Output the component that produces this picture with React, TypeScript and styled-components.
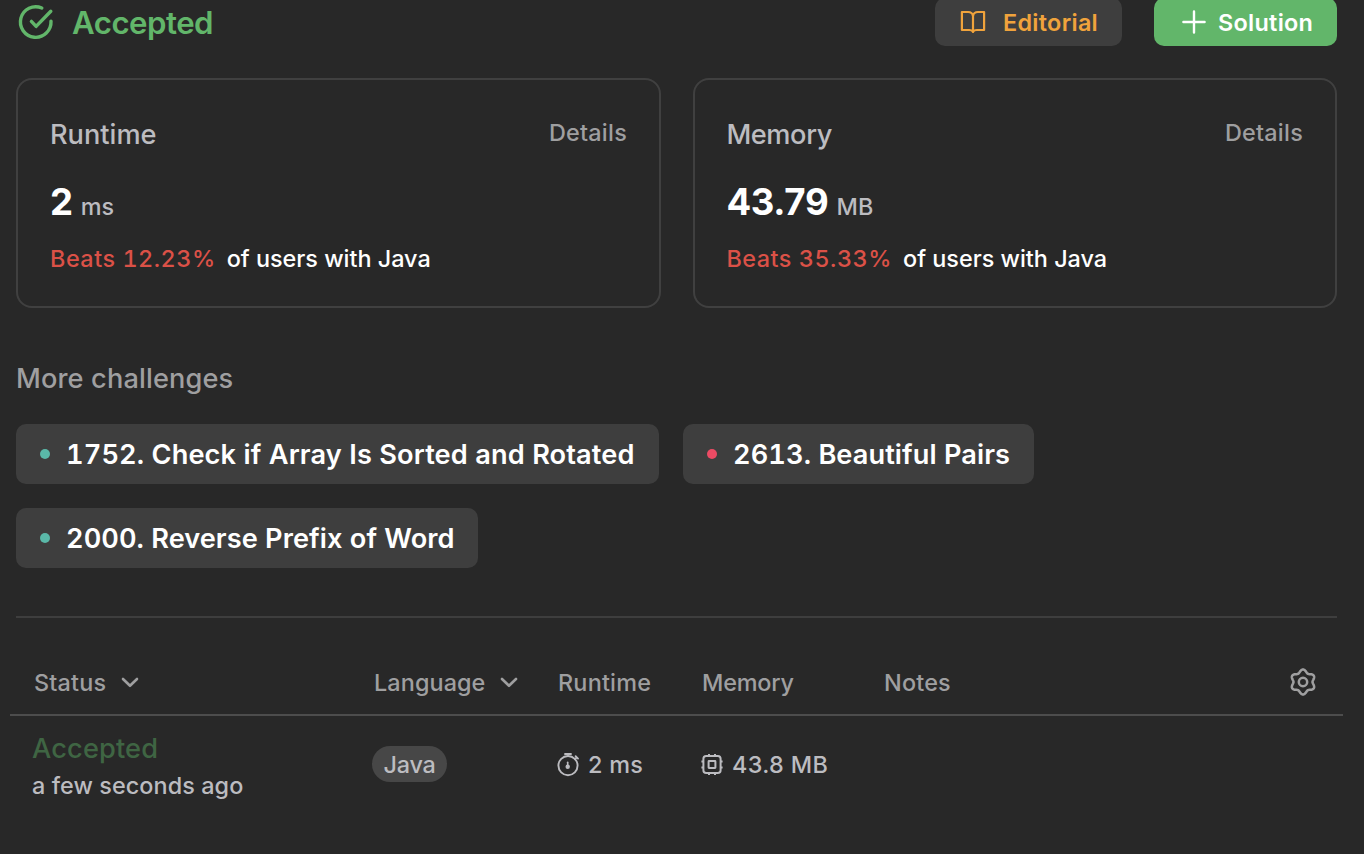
import React from "react";
import styled, { createGlobalStyle, css } from "styled-components";

const GlobalStyle = createGlobalStyle`
  *, *::before, *::after { box-sizing: border-box; }
  html, body { margin: 0; padding: 0; background: #282828; }
  body { overflow: hidden; }
  button { font: inherit; border: 0; padding: 0; background: none; color: inherit; }
`;

const color = {
  page: "#282828",
  chip: "#3e3e3e",
  line: "#3e3e3e",
  headLine: "#4d4d4d",
  green: "#62b66a",
  orange: "#f0a33c",
  red: "#db5147",
  white: "#ffffff",
  label: "#bcbcc0",
  muted: "#9f9fa0",
};

const Page = styled.main`
  width: 1364px;
  height: 854px;
  overflow: hidden;
  background: ${color.page};
  color: ${color.white};
  font-family: Inter, "Liberation Sans", sans-serif;
  font-size: 23.4px;
  font-weight: 500;
  line-height: 28px;
  white-space: nowrap;
`;

const track = css<{ $track?: number }>`
  letter-spacing: ${(p) => p.$track ?? 0}px;
`;

const Content = styled.div`
  display: flex;
  flex-direction: column;
  padding: 0 27px 0 16px;
`;

const Header = styled.header`
  display: flex;
  justify-content: space-between;
  height: 46px;
`;

const Verdict = styled.h1`
  display: flex;
  align-items: center;
  gap: 16px;
  height: 45px;
  margin: 0;
  color: ${color.green};
  font-size: 31.2px;
  font-weight: 600;
  letter-spacing: -0.5px;
`;

const Actions = styled.div`
  display: flex;
  gap: 32px;
`;

const ActionButton = styled.button<{ $bg: string; $fg: string; $width: number; $gap: number; $left: number }>`
  display: flex;
  align-items: center;
  gap: ${(p) => p.$gap}px;
  width: ${(p) => p.$width}px;
  height: 48px;
  margin-top: -2px;
  padding-left: ${(p) => p.$left}px;
  border-radius: 10px;
  background: ${(p) => p.$bg};
  color: ${(p) => p.$fg};
  font-weight: 600;
  line-height: 30px;
  letter-spacing: 0.3px;
`;

const ButtonLabel = styled.span`
  padding-top: 1px;
`;

const Cards = styled.section`
  display: grid;
  grid-template-columns: 645px 644px;
  gap: 32px;
  margin-top: 32px;
`;

const Card = styled.article`
  display: flex;
  flex-direction: column;
  height: 230px;
  padding: 38px 32px 0;
  border: 2px solid #404040;
  border-radius: 16px;

  & + & {
    padding-left: 31.4px;
  }
`;

const CardTop = styled.div`
  display: flex;
  justify-content: space-between;
  height: 32px;
`;

const CardTitle = styled.h2<{ $track?: number }>`
  margin: 0;
  color: ${color.label};
  font-size: 27.2px;
  font-weight: 500;
  line-height: 34px;
  ${track}
`;

const Details = styled.span`
  color: ${color.muted};
  line-height: 29px;
  letter-spacing: 0.25px;
`;

const Value = styled.div`
  display: flex;
  align-items: baseline;
  gap: 8px;
  height: 40px;
  margin-top: 32px;
  line-height: 41px;
`;

const Amount = styled.strong`
  font-size: 36.6px;
  font-weight: 700;
  letter-spacing: -0.3px;
`;

const Unit = styled.span<{ $track?: number }>`
  color: ${color.label};
  ${track}
`;

const Beats = styled.p`
  display: flex;
  gap: 11px;
  margin: 23px 0 0;
`;

const Percent = styled.span`
  color: ${color.red};
  font-variant-numeric: tabular-nums;
  letter-spacing: 0.52px;
`;

const SectionTitle = styled.h3`
  margin: 55px 0 29px;
  color: ${color.muted};
  font-size: 27.2px;
  font-weight: 500;
  line-height: 32px;
  letter-spacing: 0.13px;
`;

const Chips = styled.div`
  display: flex;
  flex-wrap: wrap;
  gap: 24px;
  padding-bottom: 48px;
  border-bottom: 2px solid ${color.line};
`;

const Chip = styled.div<{ $width: number; $track?: number }>`
  display: flex;
  align-items: center;
  gap: 16px;
  width: ${(p) => p.$width}px;
  height: 60px;
  padding-left: 24px;
  border-radius: 10px;
  background: ${color.chip};
  font-size: 27.2px;
  font-weight: 600;
  font-variant-numeric: tabular-nums;
  ${track}
`;

const ChipLabel = styled.span`
  padding-top: 2px;
`;

const Dot = styled.i<{ $color: string }>`
  flex: none;
  width: 10px;
  height: 10px;
  border-radius: 50%;
  background: ${(p) => p.$color};
`;

const Table = styled.section`
  margin: 32px 21px 0 10px;
`;

const columns = css`
  display: grid;
  grid-template-columns: 340px 184px 144px 182px 1fr;
`;

const TableHead = styled.div`
  ${columns}
  align-items: center;
  height: 66px;
  padding: 0 25px 0 24px;
  border-bottom: 2px solid ${color.headLine};
  color: ${color.muted};
`;

const HeadCell = styled.div<{ $track?: number }>`
  display: flex;
  align-items: center;
  gap: 14px;
  ${track}
`;

const HeadLabel = styled.span`
  padding-top: 2px;
`;

const LastCell = styled(HeadCell)`
  justify-content: space-between;
`;

const TableRow = styled.div`
  ${columns}
  align-items: center;
  height: 96px;
  padding-left: 22px;
  color: ${color.label};
`;

const Status = styled.div`
  display: flex;
  flex-direction: column;
  gap: 7px;
  margin-top: 4px;
  letter-spacing: 0.08px;
`;

const StatusName = styled.span`
  color: #3f6543;
  font-size: 27.2px;
  line-height: 32px;
  letter-spacing: 0.15px;
`;

const Tag = styled.span`
  display: flex;
  align-items: center;
  justify-content: center;
  width: 75px;
  height: 36px;
  padding-top: 1px;
  border-radius: 18px;
  background: #474747;
  letter-spacing: -0.25px;
`;

const Metric = styled.div<{ $track?: number }>`
  display: flex;
  align-items: center;
  gap: 8px;
  padding-top: 1px;
  ${track}
`;

const Svg = styled.svg`
  flex: none;
  display: block;
  fill: none;
  stroke: currentColor;
  stroke-linecap: round;
  stroke-linejoin: round;
`;

const CheckIcon = () => (
  <Svg width="40" height="40" viewBox="0 0 40 40" strokeWidth="3.4">
    <path d="M25.8 5A15.3 15.3 0 1 0 35 18.2" />
    <path d="M15.4 18.4l4.7 5L34.8 8.2" />
  </Svg>
);

const BookIcon = () => (
  <Svg width="26" height="26" viewBox="0 0 26 26" strokeWidth="2.2" strokeLinejoin="miter">
    <path d="M13 6.7C12.4 4.2 10.8 3 8.2 3H1.9V21H9.2C11.4 21 12.6 21.6 13 23C13.4 21.6 14.6 21 16.8 21H24.1V3H17.8C15.2 3 13.6 4.2 13 6.7Z" />
    <path d="M13 6.5V22.6" />
  </Svg>
);

const PlusIcon = () => (
  <Svg width="26" height="26" viewBox="0 0 26 26" strokeWidth="2.4">
    <path d="M13 2.4V23.6M2.4 13H23.6" />
  </Svg>
);

const ChevronIcon = () => (
  <Svg width="20" height="20" viewBox="0 0 20 20" strokeWidth="2.6">
    <path d="M3 7L10 13.8L17 7" />
  </Svg>
);

// Six-lobed outline, with one lobe pointing straight up.
const gearOutline = Array.from({ length: 120 }, (_, i) => {
  const angle = (i * Math.PI) / 60;
  const radius = 11 - 1.5 * Math.cos(6 * angle);
  return `${(15 + radius * Math.cos(angle)).toFixed(2)},${(15 + radius * Math.sin(angle)).toFixed(2)}`;
}).join(" ");

const GearIcon = () => (
  <Svg width="30" height="30" viewBox="0 0 30 30" strokeWidth="2.5">
    <circle cx="15" cy="15" r="4.2" />
    <polygon points={gearOutline} />
  </Svg>
);

const StopwatchIcon = () => (
  <Svg width="24" height="24" viewBox="0 0 24 24" strokeWidth="1.9">
    <circle cx="12" cy="12.6" r="9.6" />
    <path d="M9 1H15" />
    <path d="M19.6 3.2L22 5.6M20.8 4.4L19 6.2" />
    <path d="M11.7 9.2V14" strokeWidth="1.6" />
    <circle cx="11.7" cy="13.8" r="2.2" fill="currentColor" stroke="none" />
  </Svg>
);

const ChipIcon = () => (
  <Svg width="24" height="24" viewBox="0 0 24 24" strokeWidth="2">
    <rect x="3.4" y="2.9" width="17.2" height="17.2" rx="2.8" />
    <rect x="8.6" y="8.1" width="6.8" height="6.8" rx="0.4" />
    <path
      strokeLinecap="butt"
      d="M9 2.9V0.9M15 2.9V0.9M9 20.1V22.1M15 20.1V22.1M3.4 8.5H1.4M3.4 14.5H1.4M20.6 8.5H22.6M20.6 14.5H22.6"
    />
  </Svg>
);

type StatProps = { title: string; titleTrack?: number; amount: string; unit: string; unitTrack?: number; percent: string };

const Stat = ({ title, titleTrack, amount, unit, unitTrack, percent }: StatProps) => (
  <Card>
    <CardTop>
      <CardTitle $track={titleTrack}>{title}</CardTitle>
      <Details>Details</Details>
    </CardTop>
    <Value>
      <Amount>{amount}</Amount>
      <Unit $track={unitTrack}>{unit}</Unit>
    </Value>
    <Beats>
      <Percent>Beats {percent}</Percent>
      <span>of users with Java</span>
    </Beats>
  </Card>
);

const challenges = [
  { name: "1752. Check if Array Is Sorted and Rotated", dot: "#5ab8a8", width: 643, track: 0.1 },
  { name: "2613. Beautiful Pairs", dot: "#ec4b64", width: 351, track: 0.07 },
  { name: "2000. Reverse Prefix of Word", dot: "#5ab8a8", width: 462, track: 0.04 },
];

export default function App() {
  return (
    <Page>
      <GlobalStyle />
      <Content>
        <Header>
          <Verdict>
            <CheckIcon />
            Accepted
          </Verdict>
          <Actions>
            <ActionButton $bg={color.chip} $fg={color.orange} $width={187} $gap={17} $left={25}>
              <BookIcon />
              <ButtonLabel>Editorial</ButtonLabel>
            </ActionButton>
            <ActionButton $bg={color.green} $fg={color.white} $width={183} $gap={11} $left={27}>
              <PlusIcon />
              <ButtonLabel>Solution</ButtonLabel>
            </ActionButton>
          </Actions>
        </Header>
        <Cards>
          <Stat title="Runtime" amount="2" unit="ms" percent="12.23%" />
          <Stat title="Memory" titleTrack={-0.4} amount="43.79" unit="MB" unitTrack={0.1} percent="35.33%" />
        </Cards>
        <SectionTitle>More challenges</SectionTitle>
        <Chips>
          {challenges.map((c) => (
            <Chip key={c.name} $width={c.width} $track={c.track}>
              <Dot $color={c.dot} />
              <ChipLabel>{c.name}</ChipLabel>
            </Chip>
          ))}
        </Chips>
      </Content>
      <Table>
        <TableHead>
          <HeadCell $track={0.2}>
            <HeadLabel>Status</HeadLabel>
            <ChevronIcon />
          </HeadCell>
          <HeadCell $track={0.1}>
            <HeadLabel>Language</HeadLabel>
            <ChevronIcon />
          </HeadCell>
          <HeadCell $track={0.2}>
            <HeadLabel>Runtime</HeadLabel>
          </HeadCell>
          <HeadCell $track={-0.2}>
            <HeadLabel>Memory</HeadLabel>
          </HeadCell>
          <LastCell $track={0.2}>
            <HeadLabel>Notes</HeadLabel>
            <GearIcon />
          </LastCell>
        </TableHead>
        <TableRow>
          <Status>
            <StatusName>Accepted</StatusName>
            <span>a few seconds ago</span>
          </Status>
          <div>
            <Tag>Java</Tag>
          </div>
          <Metric $track={0.3}>
            <StopwatchIcon />2 ms
          </Metric>
          <Metric $track={0.35}>
            <ChipIcon />
            43.8 MB
          </Metric>
        </TableRow>
      </Table>
    </Page>
  );
}
